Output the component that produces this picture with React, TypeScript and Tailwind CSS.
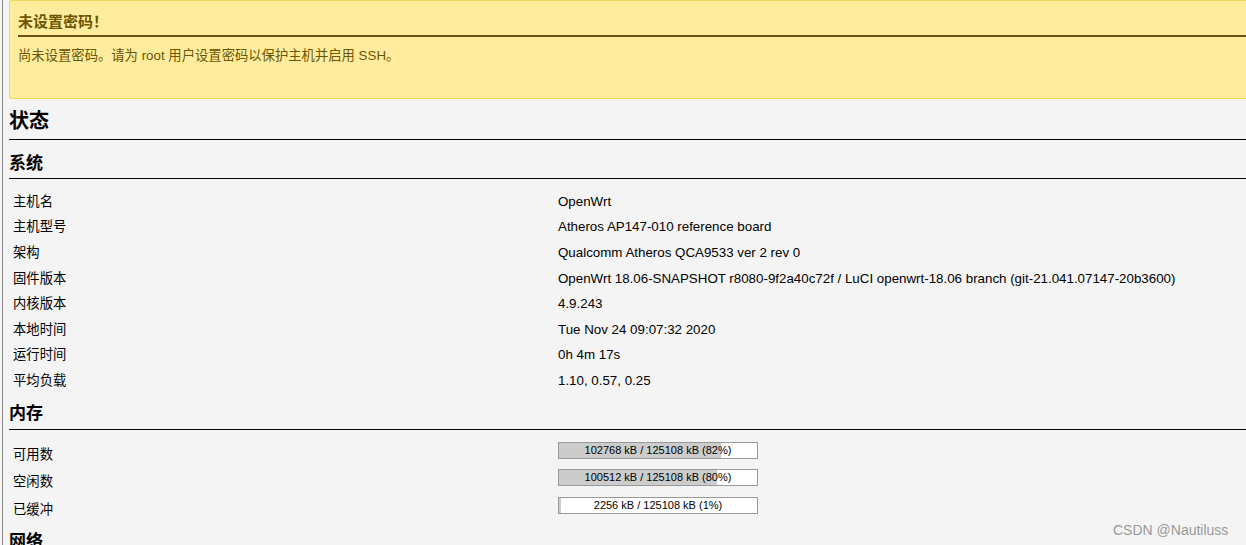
const FONT = "font-['Liberation_Sans','Noto_Sans_CJK_SC',sans-serif]";

const SYSTEM: [string, string][] = [
  ['主机名', 'OpenWrt'],
  ['主机型号', 'Atheros AP147-010 reference board'],
  ['架构', 'Qualcomm Atheros QCA9533 ver 2 rev 0'],
  ['固件版本', 'OpenWrt 18.06-SNAPSHOT r8080-9f2a40c72f / LuCI openwrt-18.06 branch (git-21.041.07147-20b3600)'],
  ['内核版本', '4.9.243'],
  ['本地时间', 'Tue Nov 24 09:07:32 2020'],
  ['运行时间', '0h 4m 17s'],
  ['平均负载', '1.10, 0.57, 0.25'],
];

const MEMORY = [
  { label: '可用数', used: 102768, pct: 82 },
  { label: '空闲数', used: 100512, pct: 80 },
  { label: '已缓冲', used: 2256, pct: 1 },
];

function Bar({ used, pct }: { used: number; pct: number }) {
  return (
    <div className="relative w-[200px] h-[17px] border border-[#999] bg-white">
      <div className="absolute inset-y-0 left-0 bg-[#ccc]" style={{ width: `${pct}%` }} />
      <div className="relative text-center text-[11px] leading-[15px] text-black">
        {used} kB / 125108 kB ({pct}%)
      </div>
    </div>
  );
}

export default function App() {
  return (
    <div className={`${FONT} relative h-[545px] overflow-hidden bg-[#f4f4f4] text-[13.33px] text-black`}>
      <div className="ml-[2px] border-l border-[#888] h-full pl-[6px]">
        {/* Warning banner */}
        <div className="bg-[#ffec9d] border border-[#efd75a] rounded-[3px] border-r-0 rounded-r-none h-[99px] pl-[8px] text-[#6d5500]">
          <h2 className="text-[15px] font-bold pt-[12px] pb-[4px] border-b-2 border-[#6b5310] leading-[18px]">未设置密码！</h2>
          <p className="pt-[11px] leading-[16px]">尚未设置密码。请为 root 用户设置密码以保护主机并启用 SSH。</p>
        </div>

        <h1 className="mt-[10px] text-[20px] font-bold leading-[24px] pb-[6px] border-b border-black">状态</h1>

        <h2 className="mt-[14px] text-[17px] font-bold leading-[20px] pb-[4px] border-b border-black">系统</h2>
        <div className="pt-[10px] pl-[4px]">
          {SYSTEM.map(([k, v]) => (
            <div key={k} className="flex h-[25.6px] items-center">
              <div className="w-[545px]">{k}</div>
              <div>{v}</div>
            </div>
          ))}
        </div>

        <h2 className="mt-[10px] text-[17px] font-bold leading-[20px] pb-[5px] border-b border-black">内存</h2>
        <div className="pt-[12px] pl-[4px]">
          {MEMORY.map((m) => (
            <div key={m.label} className="flex h-[27.5px]">
              <div className="w-[545px] pt-[3px]">{m.label}</div>
              <Bar used={m.used} pct={m.pct} />
            </div>
          ))}
        </div>

        <h2 className="mt-[8px] text-[17px] font-bold leading-[20px]">网络</h2>
      </div>
      <div className="absolute left-[1113px] top-[520px] text-[14px] text-[#999]">CSDN @Nautiluss</div>
    </div>
  );
}
